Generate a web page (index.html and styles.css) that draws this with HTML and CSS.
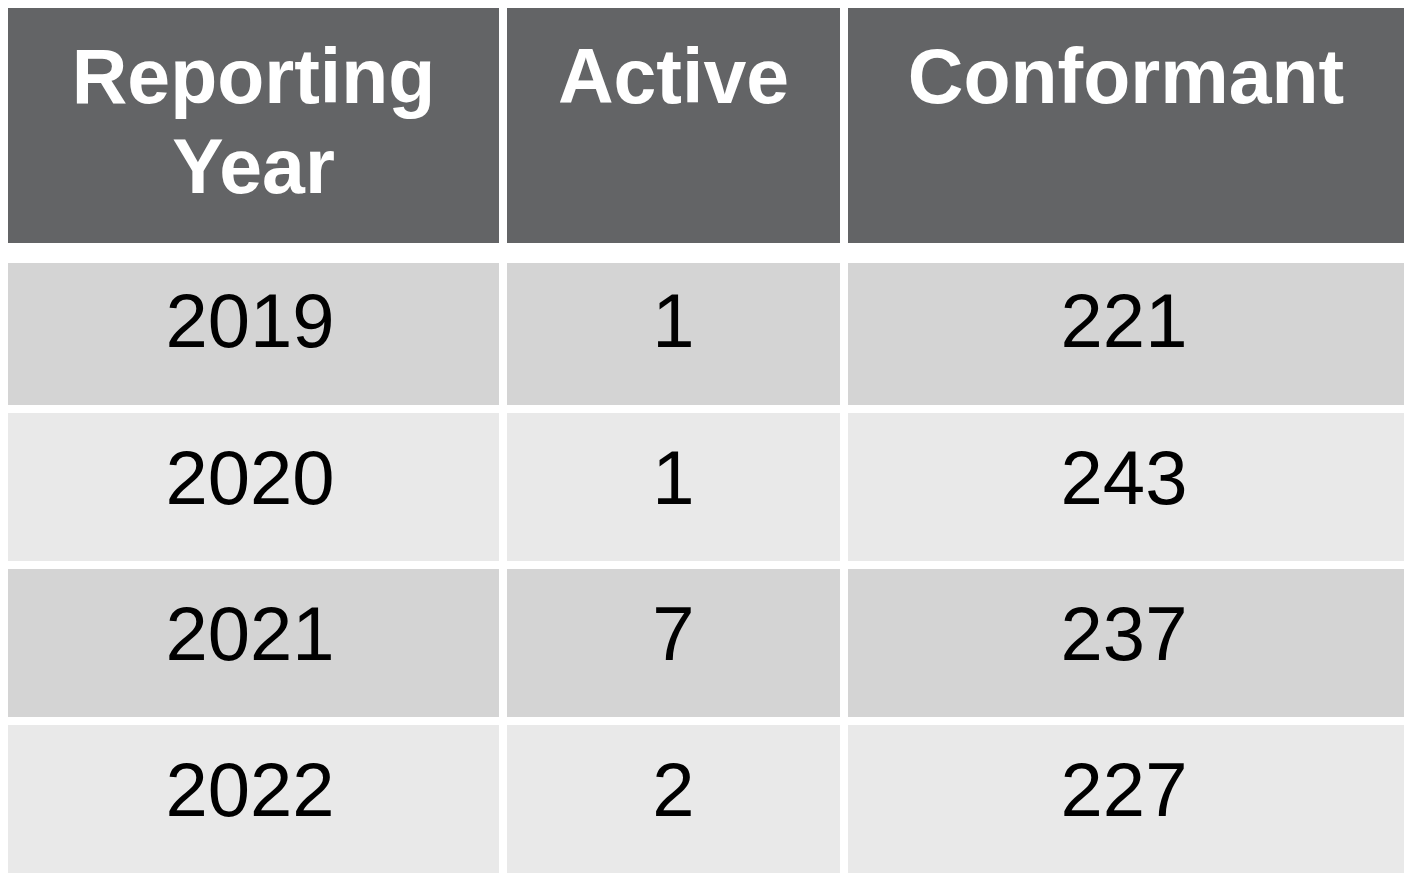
FILE: index.html
```html
<!DOCTYPE html>
<html lang="en">
<head>
<meta charset="utf-8">
<title>Reporting Year</title>
<link rel="stylesheet" href="styles.css">
</head>
<body>
<div class="table">
  <div class="head">
    <div class="th">Reporting<br>Year</div>
    <div class="th">Active</div>
    <div class="th">Conformant</div>
  </div>
  <div class="body">
    <div class="td odd first year">2019</div><div class="td odd first">1</div><div class="td odd first num">221</div>
    <div class="td even year">2020</div><div class="td even">1</div><div class="td even num">243</div>
    <div class="td odd year">2021</div><div class="td odd">7</div><div class="td odd num">237</div>
    <div class="td even year">2022</div><div class="td even">2</div><div class="td even num">227</div>
  </div>
</div>
</body>
</html>
```

FILE: styles.css
```css
html, body {
  margin: 0;
  padding: 0;
  background: #ffffff;
}
body {
  padding: 8px 0 0 8px;
  font-family: "Liberation Sans", Arial, sans-serif;
}
.table {
  display: flex;
  flex-direction: column;
  gap: 20px;
  width: 1396px;
}
.head, .body {
  display: grid;
  grid-template-columns: 491px 333px 556px;
  column-gap: 8px;
}
.body {
  row-gap: 8px;
  grid-template-rows: 142px 148px 148px 148px;
}
.th {
  height: 235px;
  box-sizing: border-box;
  background: #636466;
  color: #ffffff;
  font-weight: bold;
  font-size: 77px;
  line-height: 90px;
  text-align: center;
  padding-top: 23px;
}
.td {
  box-sizing: border-box;
  color: #000000;
  font-size: 76px;
  line-height: 88px;
  text-align: center;
  padding-top: 21px;
}
.td.first {
  padding-top: 14px;
}
.td.year {
  padding-right: 7px;
}
.td.num {
  padding-right: 4px;
}
.odd { background: #d4d4d4; }
.even { background: #e9e9e9; }
```
